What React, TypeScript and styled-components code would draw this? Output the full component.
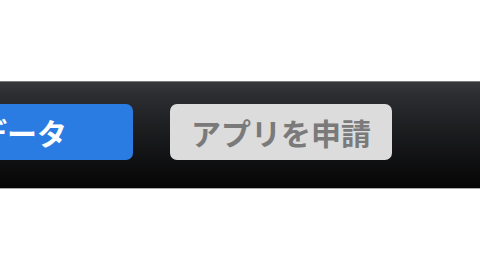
import React from 'react';
import styled, { createGlobalStyle } from 'styled-components';

const GlobalStyle = createGlobalStyle`
  html, body {
    margin: 0;
    padding: 0;
    background: #ffffff;
  }
`;

export default function App() {
  return (
    <Page>
      <GlobalStyle />
      <Toolbar>
        <ActionButton variant="primary">データ</ActionButton>
        <ActionButton variant="disabled">アプリを申請</ActionButton>
      </Toolbar>
    </Page>
  );
}

const Page = styled.div`
  padding-top: 81px;
  width: 480px;
  height: 277px;
  box-sizing: border-box;
  overflow: hidden;
`;

// the first button runs off the left edge, as in the cropped screen
const Toolbar = styled.div`
  display: flex;
  align-items: flex-start;
  gap: 37px;
  height: 108px;
  padding-top: 22px;
  box-sizing: border-box;
  overflow: hidden;
  border-top: 1px solid #7c7c7e;
  border-bottom: 1px solid #a9a9a9;
  background: linear-gradient(#38393d 0%, #2c2d31 12%, #18191b 55%, #050505 100%);

  & > :first-child {
    margin-left: -89px;
  }
`;

const ActionButton = styled.button<{ variant: 'primary' | 'disabled' }>`
  flex-shrink: 0;
  width: 222px;
  height: 56px;
  border: none;
  border-radius: 7px;
  padding: 0;
  font-family: "Noto Sans CJK JP", "Noto Sans", sans-serif;
  font-weight: 700;
  font-size: 30px;
  line-height: 56px;
  text-align: center;
  background: ${({ variant }) => (variant === 'primary' ? '#2a7ce3' : '#dcdcdc')};
  color: ${({ variant }) => (variant === 'primary' ? '#ffffff' : '#7a7a7a')};
`;
